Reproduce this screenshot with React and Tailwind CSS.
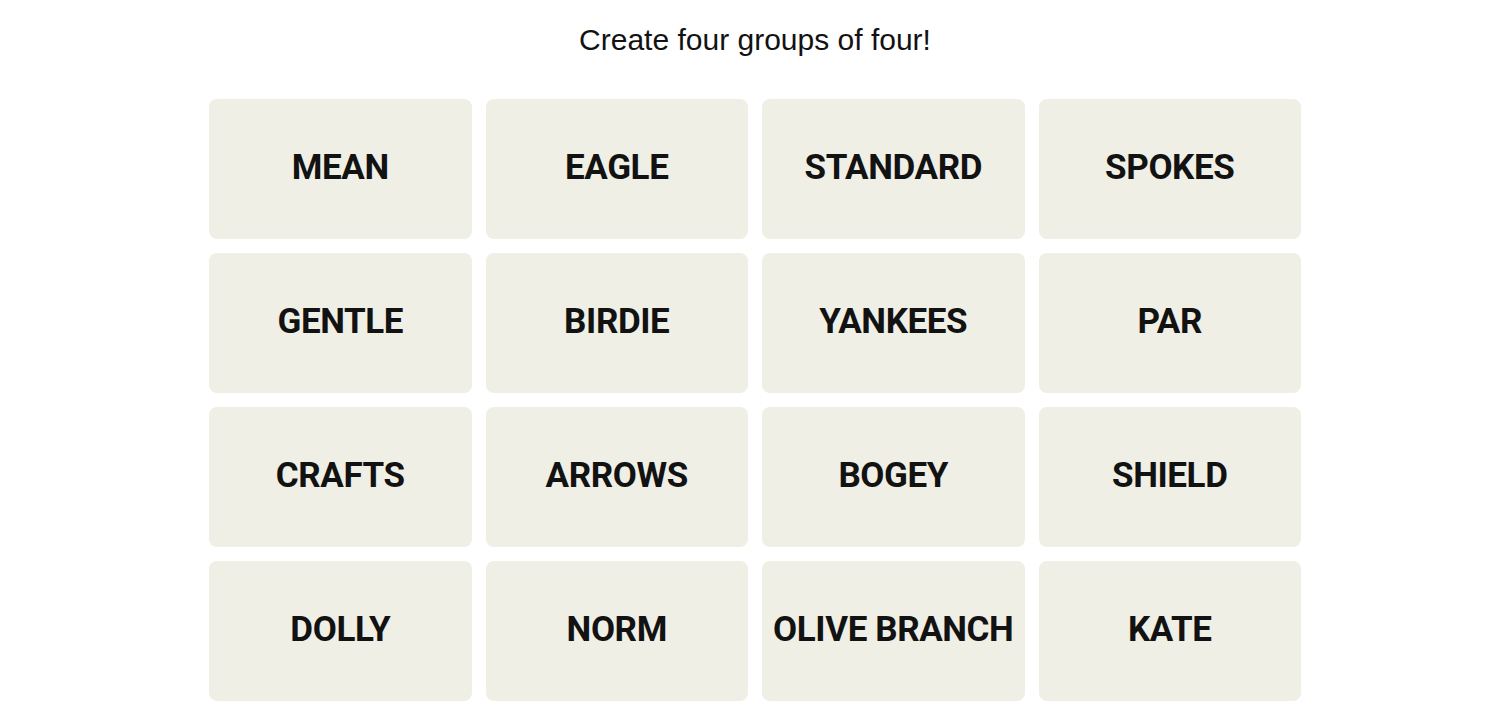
import React from 'react';

const words = [
    'MEAN', 'EAGLE', 'STANDARD', 'SPOKES',
    'GENTLE', 'BIRDIE', 'YANKEES', 'PAR',
    'CRAFTS', 'ARROWS', 'BOGEY', 'SHIELD',
    'DOLLY', 'NORM', 'OLIVE BRANCH', 'KATE',
];

export default function App() {
    return (
        <div className="min-h-screen bg-white pl-[10px] font-['Liberation_Sans',Arial,sans-serif] text-[#121212]">
            <div className="flex flex-col items-center pt-[20px]">
                <p className="text-[30px] leading-[40px]">Create four groups of four!</p>
                <div className="mt-[39px] grid w-[1092px] grid-cols-4 gap-[14px]">
                    {words.map((word) => (
                        <button
                            key={word}
                            type="button"
                            className="flex h-[140px] items-center justify-center rounded-[8px] bg-[#efefe6] pb-[2px] font-['Roboto',sans-serif] text-[35px] font-bold tracking-[-0.4px]"
                        >
                            {word}
                        </button>
                    ))}
                </div>
            </div>
        </div>
    );
}
